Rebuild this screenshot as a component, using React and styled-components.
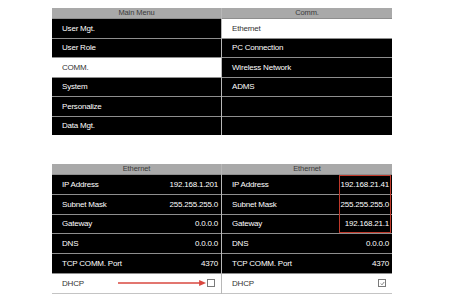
import React from "react";
import styled, { createGlobalStyle } from "styled-components";

const Global = createGlobalStyle`
  html, body { margin: 0; padding: 0; background: #fff; }
  body { font-family: "Liberation Sans", Arial, sans-serif; }
`;

const Page = styled.div`
  width: 450px;
  height: 300px;
  padding: 8px 0 0 52px;
  box-sizing: border-box;
  display: flex;
  flex-direction: column;
  gap: 29px;
`;

const Section = styled.div`
  display: grid;
  grid-template-columns: 169px 170px;
  column-gap: 1px;
  background: #b8b8b8;
  width: 340px;
`;

const Panel = styled.div`
  position: relative;
  display: flex;
  flex-direction: column;
  background: #fff;
`;

const Header = styled.div`
  height: 10px;
  line-height: 10px;
  background: #a9a9a9;
  color: #3a3a3a;
  font-size: 7.5px;
  letter-spacing: -0.1px;
  text-align: center;
`;

const Row = styled.div`
  height: ${(p) => p.$h}px;
  box-sizing: border-box;
  border-top: 1.5px solid #8e8e8e;
  background: ${(p) => (p.$active ? "#fff" : "#000")};
  color: ${(p) => (p.$active ? "#333" : "#fff")};
  font-size: 8px;
  letter-spacing: -0.2px;
  display: flex;
  align-items: center;
  padding: 0 3px 0 10px;
  ${(p) => p.$last && "border-bottom: 1px solid #c4c4c4;"}
`;

const Label = styled.span`
  flex: ${(p) => (p.$fixed ? "0 0 56px" : "1")};
  white-space: nowrap;
`;

const Value = styled.span`
  white-space: nowrap;
`;

const Checkbox = styled.span`
  width: 6px;
  height: 6px;
  border: 1px solid #7a7a7a;
  margin-left: auto;
  margin-right: 3px;
  display: flex;
  align-items: center;
  justify-content: center;
`;

const Highlight = styled.div`
  position: absolute;
  left: 117px;
  top: 11px;
  width: 52px;
  height: 58px;
  border: 1.5px solid #c0392b;
  box-sizing: border-box;
  pointer-events: none;
`;

const Arrow = () => (
  <svg width="90" height="8" viewBox="0 0 90 8" style={{ display: "block" }}>
    <line x1="0" y1="4" x2="84" y2="4" stroke="#d9473f" strokeWidth="1.5" />
    <polygon points="82,1 89,4 82,7" fill="#d9473f" />
  </svg>
);

const Check = () => (
  <svg width="5" height="5" viewBox="0 0 5 5" style={{ display: "block" }}>
    <polyline points="0.8,2.5 2,3.8 4.2,1" fill="none" stroke="#777" strokeWidth="0.9" />
  </svg>
);

const mainMenu = ["User Mgt.", "User Role", "COMM.", "System", "Personalize", "Data Mgt."];
const comm = ["Ethernet", "PC Connection", "Wireless Network", "ADMS", "", ""];

const ethLeft = [
  ["IP Address", "192.168.1.201"],
  ["Subnet Mask", "255.255.255.0"],
  ["Gateway", "0.0.0.0"],
  ["DNS", "0.0.0.0"],
  ["TCP COMM. Port", "4370"],
];
const ethRight = [
  ["IP Address", "192.168.21.41"],
  ["Subnet Mask", "255.255.255.0"],
  ["Gateway", "192.168.21.1"],
  ["DNS", "0.0.0.0"],
  ["TCP COMM. Port", "4370"],
];

function MenuPanel({ title, items, active }) {
  return (
    <Panel>
      <Header>{title}</Header>
      {items.map((t, i) => (
        <Row key={i} $h={19.5} $active={i === active}>
          <Label>{t}</Label>
        </Row>
      ))}
    </Panel>
  );
}

function EthPanel({ rows, checked, arrow, highlight }) {
  return (
    <Panel>
      <Header>Ethernet</Header>
      {rows.map(([l, v]) => (
        <Row key={l} $h={19.8}>
          <Label>{l}</Label>
          <Value>{v}</Value>
        </Row>
      ))}
      <Row $h={21} $active $last>
        <Label $fixed={arrow}>DHCP</Label>
        {arrow && <Arrow />}
        <Checkbox>{checked && <Check />}</Checkbox>
      </Row>
      {highlight && <Highlight />}
    </Panel>
  );
}

export default function App() {
  return (
    <>
      <Global />
      <Page>
        <Section>
          <MenuPanel title="Main Menu" items={mainMenu} active={2} />
          <MenuPanel title="Comm." items={comm} active={0} />
        </Section>
        <Section>
          <EthPanel rows={ethLeft} arrow />
          <EthPanel rows={ethRight} checked highlight />
        </Section>
      </Page>
    </>
  );
}
